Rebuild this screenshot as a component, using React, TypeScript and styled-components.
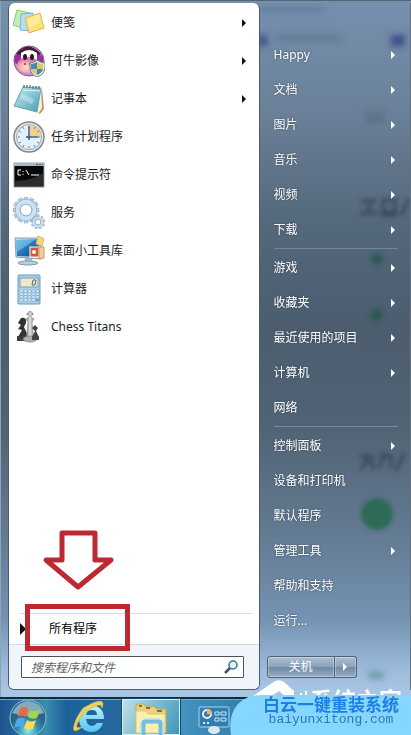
import React from "react";
import styled, { createGlobalStyle, css } from "styled-components";

const GlobalStyle = createGlobalStyle`
  *, *::before, *::after { box-sizing: border-box; }
  body {
    margin: 0;
    font-family: "Noto Sans", "Noto Sans CJK SC", sans-serif;
    font-size: 12px;
    line-height: 16px;
    color: #1c1c1c;
  }
  button, input { font: inherit; color: inherit; margin: 0; }
`;

const Desktop = styled.div`
  position: relative;
  display: flex;
  flex-direction: column;
  min-height: 100vh;
  overflow: hidden;
  background: linear-gradient(#7590ae 0, #6b8199 110px, #55697c 220px, #4b5d6f 330px, #516475 430px, #647c94 540px, #7593b2 620px, #9dbbdc 670px, #a8c5e3 692px);
`;

const StartMenu = styled.main`
  flex: 1;
  display: grid;
  grid-template-columns: minmax(0, 251fr) minmax(0, 151fr);
  padding: 2px 0 7px 8px;
  border-top: 1px solid #56646f;
  box-shadow: inset 1px 0 #8fa4b8;
`;

const ProgramsPane = styled.section`
  display: flex;
  flex-direction: column;
  padding-top: 1px;
  background: #fff;
  border: 1px solid #4e5c69;
  border-width: 0 1px 1px;
  border-radius: 6px;
  overflow: hidden;
`;

const List = styled.ul`
  list-style: none;
  margin: 0;
  padding: 0;
`;

const ProgramButton = styled.button`
  display: flex;
  align-items: center;
  gap: 6px;
  width: 100%;
  height: 38px;
  padding: 0 13px 0 4px;
  border: 0;
  background: none;
  text-align: left;
  svg:first-child { flex: none; }
  span { flex: 1; }
`;

const Caret = styled.i<{ $light?: boolean; $large?: boolean }>`
  flex: none;
  width: 0;
  height: 0;
  border: solid transparent;
  border-width: ${(p) => (p.$large ? "6px 0 6px 6px" : "4px 0 4px 4px")};
  border-left-color: ${(p) => (p.$light ? "#fff" : "#111")};
`;

const AllPrograms = styled.div`
  position: relative;
  margin-top: auto;
  padding: 0 7px 0 11px;
`;

const AllButton = styled.button`
  display: flex;
  align-items: center;
  gap: 23px;
  width: 100%;
  height: 31px;
  padding: 0;
  border: 0;
  border-top: 1px solid #d6dce3;
  background: none;
  text-align: left;
  color: #000;
`;

const Highlight = styled.div`
  position: absolute;
  left: 16px;
  top: -9px;
  width: 105px;
  height: 47px;
  border: 5px solid #be2831;
  pointer-events: none;
`;

const DownArrow = styled.svg`
  position: absolute;
  left: 33px;
  top: -84px;
`;

const SearchBar = styled.form`
  padding: 11px 15px 11px 12px;
  border-top: 1px solid #d3dbe5;
  background: #f0f4fb;
`;

const SearchBox = styled.label`
  display: flex;
  align-items: center;
  height: 22px;
  padding: 0 5px 0 9px;
  border: 1px solid #4d5358;
  border-radius: 1px;
  background: #fff;
`;

const SearchInput = styled.input`
  flex: 1;
  min-width: 0;
  height: 20px;
  padding: 0;
  border: 0;
  outline: 0;
  background: none;
  font-style: italic;
  &::placeholder { color: #62666b; opacity: 1; }
`;

const PlacesPane = styled.nav`
  position: relative;
  display: flex;
  flex-direction: column;
  padding: 34px 12px 0 7px;
  border-right: 1px solid #64717e;
  color: #fff;
`;

const PlaceItem = styled.li<{ $divided?: boolean }>`
  margin-left: 7px;
  ${(p) =>
    p.$divided &&
    css`
      margin-top: 1px;
      border-top: 1px solid #75879a;
      padding-top: 1px;
    `}
`;

const PlaceButton = styled.button`
  position: relative;
  display: flex;
  align-items: center;
  justify-content: space-between;
  width: 100%;
  height: 35px;
  padding: 0 3px 0 0;
  border: 0;
  background: none;
  text-align: left;
  text-shadow: 0 0 2px #33424f;
  white-space: nowrap;
`;

const PowerGroup = styled.div`
  display: flex;
  margin-top: auto;
  margin-bottom: 12px;
`;

const PowerButton = styled.button<{ $arrow?: boolean }>`
  display: flex;
  align-items: center;
  justify-content: center;
  width: ${(p) => (p.$arrow ? "22px" : "68px")};
  height: 22px;
  padding: 0;
  border: 1px solid #53616f;
  border-left-width: ${(p) => (p.$arrow ? 0 : "1px")};
  border-radius: ${(p) => (p.$arrow ? "0 3px 3px 0" : "3px 0 0 3px")};
  background: linear-gradient(#a9bfd5, #8ba1b8 50%, #7189a2 51%, #93aecb);
  box-shadow: inset 0 0 0 1px #ffffff55;
`;

const Glow = styled.svg`
  position: absolute;
  right: 0;
  top: 0;
  width: 151px;
  height: 690px;
  pointer-events: none;
`;

const Taskbar = styled.footer`
  display: flex;
  height: 38px;
  border-top: 2px solid #102c43;
  background: linear-gradient(90deg, #1c5489 0, #24699e 18px, #3a8caf 46px, #1d619b 66px, #25699f 120px, #4392c0 181px, #347fae 240px, #3f81ad);
  box-shadow: inset 0 1px #72a6c8;
`;

const TaskButton = styled.button<{ $width: number; $active?: boolean }>`
  display: flex;
  justify-content: center;
  align-items: flex-start;
  flex: none;
  width: ${(p) => p.$width}px;
  height: 36px;
  padding: 0;
  overflow: hidden;
  border: 0;
  background: ${(p) => (p.$active ? "linear-gradient(120deg, #c3e1e8, #71b8cf 55%, #3c95b8)" : "none")};
  box-shadow: ${(p) => (p.$active ? "inset 0 0 0 1px #d8edf4, 0 0 0 1px #194765" : "none")};
`;

const Brand = styled.aside`
  position: absolute;
  right: 0;
  bottom: 0;
  width: 181px;
  height: 56px;
`;

const BrandShape = styled.svg`
  position: absolute;
  inset: 0;
`;

const BrandText = styled.div`
  position: absolute;
  right: 0;
  bottom: 0;
  width: 160px;
  padding-bottom: 7px;
  text-align: center;
  color: #1c7fe6;
`;

const BrandName = styled.strong`
  display: block;
  font-family: "Noto Sans CJK SC", sans-serif;
  font-size: 17px;
  line-height: 16px;
  font-weight: 700;
`;

const BrandLink = styled.a`
  display: block;
  font-family: "Liberation Mono", monospace;
  font-size: 13px;
  line-height: 16px;
  color: #2b78c0;
  text-decoration: none;
`;

const Icon = ({ children }: { children: React.ReactNode }) => (
  <svg width="32" height="32" viewBox="0 0 32 32" aria-hidden="true">{children}</svg>
);

const NotesIcon = () => (
  <Icon>
    <path d="M4 3 17 6 12 22 0 18Z" fill="#c4ecb5" stroke="#8cca84" />
    <path d="M8 7 20 6 20 24 7 23Z" fill="#b2def8" stroke="#76b5dc" />
    <path d="M12 11 27 6 31 21 16 26Z" fill="#fbe278" stroke="#e5b64b" />
    <path d="M14 12 26 8 28 15 16 21Z" fill="#fff1a7" opacity=".7" />
  </Icon>
);

const PhotoIcon = () => (
  <Icon>
    <defs>
      <radialGradient id="face" cx=".4" cy=".65"><stop stopColor="#ffdfc4" /><stop offset=".65" stopColor="#f5a9ac" /><stop offset="1" stopColor="#d873b0" /></radialGradient>
    </defs>
    <circle cx="16" cy="16" r="15" fill="#cb90d2" stroke="#8e4c9a" />
    <path d="M3 9Q15-6 28 9L24 12H7Z" fill="#432039" />
    <path d="M1 11Q8 7 10 13L8 21 2 18ZM30 11Q23 7 22 13L24 20 30 17Z" fill="#9c2d9c" />
    <path d="M8 8Q16 2 24 8V17H8Z" fill="#fff" />
    <ellipse cx="15" cy="20" rx="11" ry="8" fill="url(#face)" />
    <ellipse cx="12" cy="12" rx="2" ry="3" fill="#2b1720" /><ellipse cx="19" cy="12" rx="2" ry="3" fill="#2b1720" />
    <circle cx="12" cy="19" r="1" fill="#963650" /><circle cx="17" cy="19" r="1" fill="#963650" />
    <path d="M24 15Q28 18 32 18V23Q31 30 24 32 18 30 17 23V18Q21 18 24 15Z" fill="#e7ecef" stroke="#69808f" />
    <path d="M24 17V24H18V19Q21 19 24 17ZM24 24H30Q29 28 24 30Z" fill="#4a88ad" />
    <path d="M24 17Q27 19 30 19V24H24ZM18 24H24V30Q19 28 18 24Z" fill="#d6cb68" />
  </Icon>
);

const NotepadIcon = () => (
  <Icon>
    <defs><linearGradient id="pad" x2="1" y2="1"><stop stopColor="#c6e9ef" /><stop offset="1" stopColor="#459eb9" /></linearGradient></defs>
    <path d="M29 5 31 26 27 31 24 29Z" fill="#c39363" />
    <path d="M28 5 29 25 26 30 23 28Z" fill="#f4f3df" />
    <path d="M10 4 28 5 24 29 1 23Z" fill="url(#pad)" stroke="#70a3af" />
    <path d="M10 7 27 8" stroke="#def7f9" />
    <path d="M11 5V2M14 5V2M17 5V2M20 6V3M23 6V3M26 6V3" stroke="#657d82" strokeWidth="1.500" />
    <path d="M8 13 20 19" stroke="#dcf8fa" opacity=".4" strokeWidth="5" />
  </Icon>
);

const ClockIcon = () => (
  <Icon>
    <circle cx="16" cy="16" r="15" fill="#e5e8e8" stroke="#83898b" strokeWidth="1.500" />
    <circle cx="16" cy="16" r="12.500" fill="#e2f0fb" stroke="#a0a8ac" />
    <path d="M16 4A12 12 0 0 1 28 16H16Z" fill="#f1d38f" />
    <path d="M16 5V7M16 25V27M5 16H7M25 16H27M10 6 11 8M22 6 21 8M6 10 8 11M26 10 24 11M6 22 8 21M26 22 24 21M10 26 11 24M22 26 21 24" stroke="#61839c" />
    <path d="M16 5V19M13 16H25" stroke="#3d6785" strokeWidth="1.500" />
    <circle cx="16" cy="16" r="1.500" fill="#3d6785" />
  </Icon>
);

const CommandIcon = () => (
  <Icon>
    <rect x="1" y="4" width="30" height="24" fill="#080808" stroke="#96a0a9" />
    <path d="M1 4H31V7H1Z" fill="#a9b7c5" /><path d="M23 5.500H30" stroke="#4e6275" strokeDasharray="2 1" />
    <path d="M2 22Q18 22 30 14V27H2Z" fill="#2c2c2c" />
    <path d="M8 11H5V16H8M10 12V13M10 15V16M13 11 16 16M18 16H26" fill="none" stroke="#fff" />
  </Icon>
);

const GearShape = ({ x, y, r, teeth }: { x: number; y: number; r: number; teeth: number }) => (
  <g transform={`translate(${x} ${y})`} fill="none">
    {Array.from({ length: teeth }, (_, i) => (
      <rect key={i} x={-r / 6} y={-r - 1} width={r / 3} height={r / 3} fill="#b5d0e6" stroke="#85a3bb" strokeWidth=".5" transform={`rotate(${(i * 360) / teeth})`} />
    ))}
    <circle r={r * 0.7} stroke="#89a8c0" strokeWidth={r * 0.42} />
    <circle r={r * 0.7} stroke="#cfe2f1" strokeWidth={r * 0.34} />
    <circle r={r * 0.48} stroke="#7b9cb8" strokeWidth=".7" />
  </g>
);

const ServicesIcon = () => (
  <Icon><GearShape x={13} y={13} r={12} teeth={12} /><GearShape x={25} y={25} r={6} teeth={9} /></Icon>
);

const GadgetIcon = () => (
  <Icon>
    <defs><linearGradient id="screen" x2="1" y2="1"><stop stopColor="#68bfe7" /><stop offset=".5" stopColor="#2176b8" /><stop offset="1" stopColor="#0c477e" /></linearGradient></defs>
    <path d="M12 23H19L20 28H11Z" fill="#a8bdcb" /><ellipse cx="15" cy="28" rx="10" ry="2" fill="#b9d0df" stroke="#829dae" />
    <path d="M2 3 28 3V24L3 22Z" fill="#cddce5" stroke="#809eb3" />
    <path d="M3 5 26 4V22L4 21Z" fill="url(#screen)" /><path d="M3 5 23 4 4 17Z" fill="#7dc8ea" opacity=".6" />
    <path d="M25 1 31 4 29 11 23 9Z" fill="#f6d77d" stroke="#dfb34e" />
    <rect x="17" y="12" width="9" height="10" fill="#d95439" stroke="#fff" /><circle cx="21" cy="17" r="2" fill="#fff" />
    <path d="M26 12H31V23L26 24Z" fill="#edcea0" stroke="#c99961" />
  </Icon>
);

const CalculatorIcon = () => (
  <Icon>
    <rect x="5" y="2" width="22" height="29" rx="1" fill="#a9d1ea" stroke="#649cc3" />
    <rect x="7" y="5" width="18" height="9" fill="#f5e5c9" stroke="#79a1bd" />
    <path d="M20 7H23L22 12H19Z" fill="none" stroke="#476d86" />
    {[17, 20, 23, 26].flatMap((y) => [7, 11, 15, 19, 23].map((x) => <rect key={`${x}-${y}`} x={x} y={y} width="3" height="2" fill={x === 23 && y === 26 ? "#d49b51" : "#f2faff"} stroke="#5994bd" strokeWidth=".4" />))}
  </Icon>
);

const ChessIcon = () => (
  <Icon>
    <defs><linearGradient id="king"><stop stopColor="#555" /><stop offset=".45" stopColor="#e4e4e4" /><stop offset="1" stopColor="#616161" /></linearGradient></defs>
    <path d="M8 7Q14 6 13 12L11 16Q14 22 15 26H5L9 19 5 18 8 14 5 12Z" fill="#333" /><path d="M4 25H16V30H4Z" fill="#3b3b3b" />
    <path d="M16 0H18V2H20V4H18V6L21 8 19 11 20 22 23 28H12L14 22 15 11 13 8 16 6V4H14V2H16Z" fill="url(#king)" stroke="#777" strokeWidth=".5" />
    <ellipse cx="17" cy="28" rx="7" ry="3" fill="#b0b0b0" stroke="#666" strokeWidth=".6" />
    <path d="M22 14 25 17 23 20 26 26V29H19V26L22 20 19 17Z" fill="#424242" />
  </Icon>
);

const StartIcon = () => (
  <svg width="38" height="38" viewBox="0 0 38 38" aria-hidden="true">
    <defs><radialGradient id="orb" cx=".5" cy=".85"><stop stopColor="#8df0f2" /><stop offset=".55" stopColor="#3590b0" /><stop offset="1" stopColor="#2c6488" /></radialGradient></defs>
    <circle cx="19" cy="19" r="18" fill="url(#orb)" stroke="#8bc5d7" />
    <path d="M3 14Q9 2 20 2 31 3 35 14 19 20 3 14Z" fill="#d8eef4" opacity=".5" />
    <path d="M11 10Q15 6 19 10L17 18Q13 15 9 18Z" fill="#ee6839" />
    <path d="M21 11Q25 14 31 10L28 19Q23 21 19 18Z" fill="#a5d747" />
    <path d="M8 20Q13 17 16 20L14 29Q10 26 5 29Z" fill="#4cacea" />
    <path d="M18 21Q22 24 27 21L24 30Q20 32 15 29Z" fill="#ffdc51" />
  </svg>
);

const BrowserIcon = () => (
  <svg width="36" height="36" viewBox="0 0 36 36" aria-hidden="true">
    <defs><linearGradient id="globe" x2="0" y2="1"><stop stopColor="#c1f2ff" /><stop offset="1" stopColor="#55c3f3" /></linearGradient></defs>
    <path d="M33 20H15Q16 27 21 27 24 27 26 24H32Q29 33 20 33 8 32 8 19 9 7 20 6 33 7 33 20ZM15 16H26Q26 11 21 11 16 11 15 16Z" fill="url(#globe)" />
    <path d="M11 28Q1 36 3 27 7 10 22 4 35-1 31 9 31 4 24 7 11 12 6 25 4 31 11 28Z" fill="#f0d452" stroke="#d8ba48" />
  </svg>
);

const FolderIcon = () => (
  <svg width="34" height="36" viewBox="0 0 34 36" aria-hidden="true">
    <path d="M2 7Q2 5 4 5H10L12 8H17L19 7 23 10H32V33H2Z" fill="#ecd07a" stroke="#c7a653" />
    <path d="M5 7H8M23 12H28" stroke="#458a54" strokeWidth="2" /><path d="M12 9H16" stroke="#bd573a" strokeWidth="2" />
    <path d="M2 12H12L14 15H31V34H2Z" fill="#fbf0ad" stroke="#dfc878" />
    <path d="M9 36V25Q9 22 12 22H24Q27 22 27 25V36" fill="none" stroke="#75bde0" strokeWidth="5" />
    <path d="M7 36V24Q7 20 11 20H25Q29 20 29 24V36" fill="none" stroke="#d4f1ff" />
  </svg>
);

const PanelIcon = () => (
  <svg width="34" height="36" viewBox="0 0 34 36" aria-hidden="true">
    <rect x="2" y="8" width="30" height="20" rx="1" fill="#327daf" stroke="#a6d9ee" />
    <circle cx="10" cy="15" r="4" fill="none" stroke="#e2eff3" strokeWidth="2" /><path d="M10 15V10Q15 10 15 15Z" fill="#e8b95d" />
    <path d="M18 13H22V16H18ZM24 13H29V16H24ZM18 19H22V22H18ZM24 19H29V22H24Z" fill="none" stroke="#c7eaf7" />
    <path d="M6 24H8M10 24H12" stroke="#dcebf0" strokeWidth="2" /><ellipse cx="17" cy="31" rx="6" ry="4" fill="#e1e7e9" />
  </svg>
);

const programs = [
  { name: "便笺", icon: <NotesIcon />, more: true },
  { name: "可牛影像", icon: <PhotoIcon />, more: true },
  { name: "记事本", icon: <NotepadIcon />, more: true },
  { name: "任务计划程序", icon: <ClockIcon /> },
  { name: "命令提示符", icon: <CommandIcon /> },
  { name: "服务", icon: <ServicesIcon /> },
  { name: "桌面小工具库", icon: <GadgetIcon /> },
  { name: "计算器", icon: <CalculatorIcon /> },
  { name: "Chess Titans", icon: <ChessIcon /> },
];

const places = [
  { name: "Happy", more: true },
  { name: "文档", more: true },
  { name: "图片", more: true },
  { name: "音乐", more: true },
  { name: "视频", more: true },
  { name: "下载", more: true },
  { name: "游戏", more: true, divided: true },
  { name: "收藏夹", more: true },
  { name: "最近使用的项目", more: true },
  { name: "计算机", more: true },
  { name: "网络" },
  { name: "控制面板", more: true, divided: true },
  { name: "设备和打印机" },
  { name: "默认程序" },
  { name: "管理工具", more: true },
  { name: "帮助和支持" },
  { name: "运行..." },
];

export default function App() {
  return (
    <Desktop>
      <GlobalStyle />
      <StartMenu>
        <ProgramsPane>
          <List>
            {programs.map((p) => (
              <li key={p.name}>
                <ProgramButton type="button">{p.icon}<span>{p.name}</span>{p.more && <Caret />}</ProgramButton>
              </li>
            ))}
          </List>
          <AllPrograms>
            <AllButton type="button"><Caret $large /><span>所有程序</span></AllButton>
            <Highlight />
            <DownArrow width="74" height="64" viewBox="0 0 74 64" aria-hidden="true">
              <path d="M20 4H53V31H69L36 58 4 31H20Z" fill="#fff" stroke="#be2831" strokeWidth="5" strokeLinejoin="round" />
            </DownArrow>
          </AllPrograms>
          <SearchBar>
            <SearchBox>
              <SearchInput type="text" aria-label="搜索程序和文件" placeholder="搜索程序和文件" />
              <svg width="14" height="14" viewBox="0 0 14 14" aria-hidden="true">
                <path d="M7 7 1 13" stroke="#3c5269" strokeWidth="2.500" /><circle cx="9" cy="5" r="4" fill="#e1f4fb" stroke="#3c7190" strokeWidth="1.500" />
              </svg>
            </SearchBox>
          </SearchBar>
        </ProgramsPane>
        <PlacesPane>
          <Glow viewBox="0 0 151 690" aria-hidden="true">
            <defs>
              <filter id="soft"><feGaussianBlur stdDeviation="3" /></filter>
              <filter id="smudge"><feGaussianBlur stdDeviation="2" /></filter>
            </defs>
            <g filter="url(#soft)">
              <path d="M0 4H65V9H0ZM18 32H82V38H18Z" fill="#4f6783" opacity=".5" />
              <path d="M0 32H8V43H0ZM132 32H146V43H132Z" fill="#353b87" opacity=".8" />
              <path d="M106 108H126V120H106Z" fill="#4c5e71" opacity=".4" />
              <circle cx="118" cy="256" r="5" fill="#1f5441" /><circle cx="118" cy="312" r="5" fill="#1f5441" />
              <ellipse cx="117" cy="672" rx="9" ry="4" fill="#508b88" opacity=".7" />
            </g>
            <g filter="url(#smudge)">
              <path d="M102 198H118M110 198V210M101 210H119M124 197H136V209H124ZM122 212H138M150 196 142 212" fill="none" stroke="#2c3c49" strokeWidth="3" opacity=".7" />
              <path d="M101 454H116M108 450V456L102 467M108 459H114V467M120 453H132V466M126 450 120 466M145 451 137 468" fill="none" stroke="#2c3c49" strokeWidth="3" opacity=".7" />
              <circle cx="118" cy="511" r="16" fill="#2f6b56" />
            </g>
          </Glow>
          <List>
            {places.map((p) => (
              <PlaceItem key={p.name} $divided={p.divided}>
                <PlaceButton type="button"><span>{p.name}</span>{p.more && <Caret $light />}</PlaceButton>
              </PlaceItem>
            ))}
          </List>
          <PowerGroup>
            <PowerButton type="button">关机</PowerButton>
            <PowerButton type="button" $arrow aria-label="关机选项"><Caret $light /></PowerButton>
          </PowerGroup>
        </PlacesPane>
      </StartMenu>
      <Taskbar>
        <TaskButton type="button" $width={55} aria-label="开始"><StartIcon /></TaskButton>
        <TaskButton type="button" $width={67} aria-label="Internet Explorer"><BrowserIcon /></TaskButton>
        <TaskButton type="button" $width={58} $active aria-label="资源管理器"><FolderIcon /></TaskButton>
        <TaskButton type="button" $width={67} aria-label="控制面板"><PanelIcon /></TaskButton>
      </Taskbar>
      <Brand>
        <BrandShape width="181" height="56" viewBox="0 0 181 56" aria-hidden="true">
          <path d="M20 19 45 2Q50 0 54 3L64 12V20H58L49 12 40 18Z" fill="#fff" />
          <path d="M71 14V20M76 12V20" stroke="#fff" strokeWidth="2" />
          <text x="80" y="30" fill="#fff" fontFamily="Noto Sans CJK SC, sans-serif" fontSize="23" fontWeight="700">系统之家</text>
          <path d="M1 56Q-2 36 8 25 16 16 32 16H181V56Z" fill="#86d7ff" />
        </BrandShape>
        <BrandText>
          <BrandName>白云一键重装系统</BrandName>
          <BrandLink href="#">baiyunxitong.com</BrandLink>
        </BrandText>
      </Brand>
    </Desktop>
  );
}
